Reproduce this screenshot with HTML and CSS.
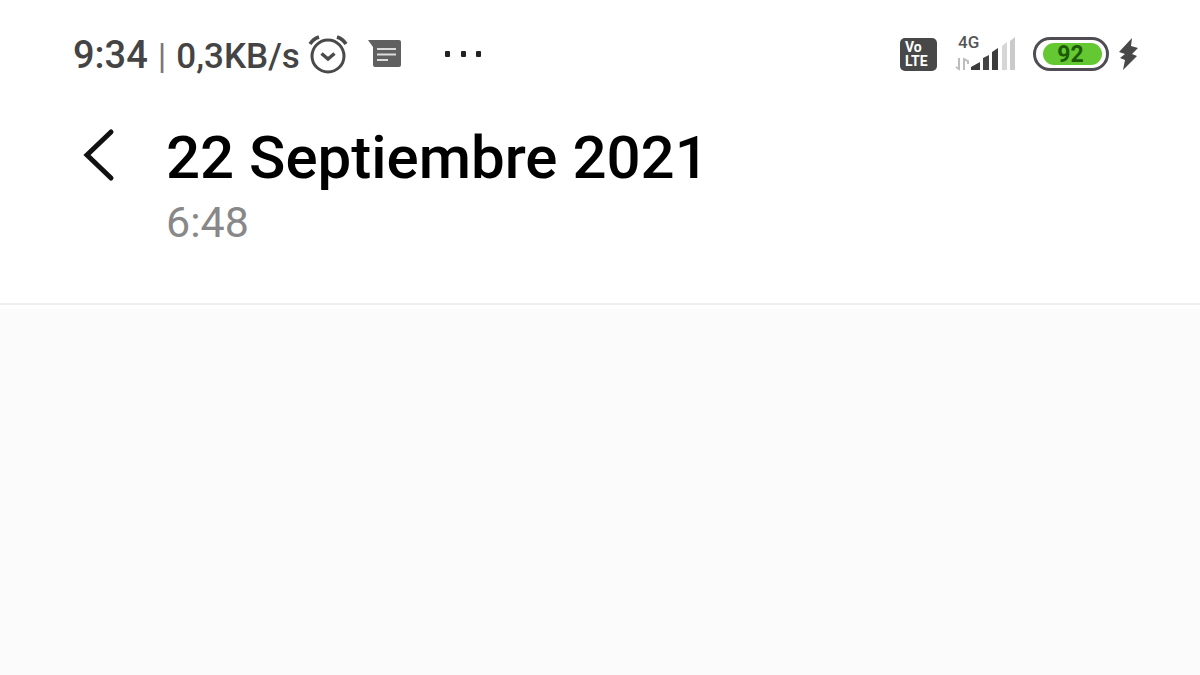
FILE: index.html
```html
<!DOCTYPE html>
<html lang="es">
<head>
    <meta charset="UTF-8">
    <meta name="viewport" content="width=device-width, initial-scale=1.0">
    <title>22 Septiembre 2021</title>
    <link rel="stylesheet" href="styles.css">
</head>
<body>

<!-- Barra de estado -->
<div class="status-bar">
    <div class="status-left">
        <div class="status-text">
            <span class="clock">9:34</span>
            <span class="separator">|</span>
            <span class="speed">0,3KB/s</span>
        </div>
        <svg class="icon-alarm" width="40" height="40" viewBox="0 0 40 40" fill="none" stroke="#4a4a4a" stroke-width="3">
            <circle cx="20" cy="22" r="16"/>
            <path d="M13.500 19.500L20 25L26.500 19.500" stroke-width="3.500"/>
            <path d="M2 10Q5 5 11 3M29 3Q35 5 38 10" stroke-width="3.500"/>
        </svg>
        <svg class="icon-message" width="34" height="28" viewBox="0 0 34 28">
            <path d="M0 0H31Q33 0 33 2V25Q33 27 31 27H7Q5 27 5 25V7Z" fill="#606060"/>
            <path d="M9 9H28M9 14.500H28M9 20H20" stroke="#dcdcdc" stroke-width="2"/>
        </svg>
        <svg class="icon-more" width="40" height="6" viewBox="0 0 40 6" fill="#222">
            <rect x="1" y="0" width="5" height="6" rx="1"/>
            <rect x="17" y="0" width="5" height="6" rx="1"/>
            <rect x="32" y="0" width="5" height="6" rx="1"/>
        </svg>
    </div>
    <div class="status-right">
        <div class="volte">
            <span>Vo</span>
            <span>LTE</span>
        </div>
        <div class="signal">
            <span class="network">4G</span>
            <svg width="64" height="36" viewBox="0 0 64 36">
                <path d="M6 22V33L3 31M11 34V23L15 25V28" fill="none" stroke="#bdbdbd" stroke-width="2"/>
                <path d="M18 34V31L27 26V34Z" fill="#3c3c3c"/>
                <path d="M30 34V22L36 19V34Z" fill="#444"/>
                <path d="M39 34V16L45 12V34Z" fill="#3c3c3c"/>
                <path d="M49 34V10L54 6V34Z" fill="#d6d6d6"/>
                <path d="M57 34V5L62 1V34Z" fill="#cacaca"/>
            </svg>
        </div>
        <div class="battery">
            <div class="battery-level">92</div>
        </div>
        <svg class="icon-bolt" width="20" height="34" viewBox="0 0 20 34">
            <path d="M13 1L0 15L6 17L1 21L6 23L4 33L18 19L13 17L19 11L12 9Z" fill="#484848"/>
        </svg>
    </div>
</div>

<!-- Encabezado con la fecha -->
<header class="header">
    <button type="button" class="back-btn" aria-label="Volver">
        <svg width="32" height="54" viewBox="0 0 32 54" fill="none" stroke="#111" stroke-width="5" stroke-linecap="round">
            <path d="M28 4L4 27L28 50"/>
        </svg>
    </button>
    <div class="header-info">
        <h1>22 Septiembre 2021</h1>
        <p class="hour">6:48</p>
    </div>
</header>

<main class="content"></main>

</body>
</html>
```
FILE: styles.css
```css
body {
    font-family: Roboto, "Liberation Sans", sans-serif;
    background-color: #fff;
    margin: 0;
    min-height: 100vh;
    display: flex;
    flex-direction: column;
}
.status-bar {
    display: flex;
    justify-content: space-between;
    align-items: center;
    height: 108px;
    padding: 0 61px 0 73px;
}
.status-left, .status-right {
    display: flex;
    align-items: center;
}
.status-text {
    display: flex;
    align-items: baseline;
    gap: 10px;
    padding-top: 3px;
    font-size: 35px;
    font-weight: 500;
    line-height: 44px;
    color: #444;
    white-space: nowrap;
}
.clock {
    font-size: 38px;
}
.separator {
    font-weight: 400;
    color: #777;
}
.icon-alarm {
    margin-left: 8px;
}
.icon-message {
    margin-left: 20px;
}
.icon-more {
    margin-left: 42px;
}
.volte {
    display: flex;
    flex-direction: column;
    justify-content: center;
    width: 37px;
    height: 33px;
    padding-left: 5px;
    box-sizing: border-box;
    border-radius: 5px;
    background-color: #484848;
    color: #fff;
    font-size: 14px;
    font-weight: 700;
    line-height: 14px;
}
.signal {
    position: relative;
    height: 36px;
    margin-left: 16px;
}
.network {
    position: absolute;
    top: -2px;
    left: 5px;
    font-size: 17px;
    font-weight: 500;
    line-height: 16px;
    color: #555;
}
.battery {
    box-sizing: border-box;
    width: 76px;
    height: 34px;
    margin-left: 16px;
    padding: 3px 4px 3px 7px;
    border: 3px solid #504c54;
    border-radius: 17px;
}
.battery-level {
    height: 22px;
    border-radius: 11px;
    background-color: #63c832;
    color: #1c5a08;
    font-size: 23px;
    font-weight: 700;
    line-height: 23px;
    text-align: center;
    padding-right: 4px;
}
.icon-bolt {
    margin-left: 10px;
}
.header {
    display: flex;
    align-items: flex-start;
    padding: 20px 83px 56px;
    border-bottom: 2px solid #eee;
}
.back-btn {
    display: flex;
    padding: 0;
    margin-right: 51px;
    border: none;
    background: none;
    cursor: pointer;
}
h1 {
    margin: 0;
    font-size: 60px;
    font-weight: 500;
    line-height: 60px;
    color: #000;
}
.hour {
    margin: 10px 0 0;
    font-size: 43px;
    line-height: 49px;
    color: #888;
}
.content {
    flex: 1;
    margin-top: 4px;
    background-color: #fbfbfb;
}
```
